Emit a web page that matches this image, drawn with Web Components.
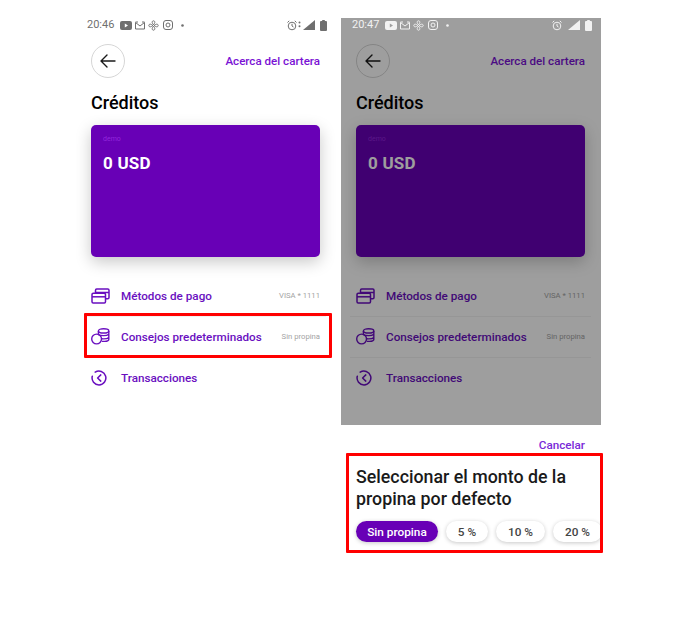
<!DOCTYPE html>
<html lang="es">
<head>
<meta charset="utf-8">
<title>Créditos</title>
<style>
  html, body { margin: 0; background: #fff; }
  body { font-family: Roboto, "Liberation Sans", sans-serif; }
</style>
</head>
<body>
<wallet-page>
  <wallet-phone time="20:46"></wallet-phone>
  <wallet-phone time="20:47" dimmed>
    <tip-sheet slot="sheet"></tip-sheet>
  </wallet-phone>
  <red-box slot="marks" style="left:84px;top:313px;width:248px;height:45px"></red-box>
  <red-box slot="marks" style="left:346px;top:453px;width:257px;height:100px"></red-box>
</wallet-page>

<script>
  // shared purple icons for the rows
  const ICONS = {
    cards: `<svg width="19" height="16" viewBox="0 0 19 16" fill="none" stroke="currentColor" stroke-width="1.5" stroke-linejoin="round">
      <rect x="1" y="5.2" width="13.5" height="9.8" rx="1.2"/><path d="M1 8.8h13.5"/>
      <path d="M4.5 5V2.2q0-1.2 1.2-1.2H16.8q1.2 0 1.2 1.2v7.4q0 1.2-1.2 1.2h-2.2M4.5 4.4H18"/></svg>`,
    coins: `<svg width="19" height="17" viewBox="0 0 19 17" fill="none" stroke="currentColor" stroke-width="1.4">
      <circle cx="5.6" cy="11" r="4.9"/>
      <ellipse cx="12.6" cy="2.9" rx="5.2" ry="2.1"/>
      <path d="M7.4 3v3.6M17.8 3v8.4q0 1.7-4 2h-3M7.4 6.6q1.5 1 5.2 1 3.7 0 5.2-1.4M10.6 10.8q.9.1 2 .1 3.7 0 5.2-1.4"/></svg>`,
    clock: `<svg width="16" height="16" viewBox="0 0 16 16" fill="none" stroke="currentColor" stroke-width="1.5" stroke-linecap="round" stroke-linejoin="round">
      <path d="M4.2 2.2A6.9 6.9 0 1 1 1.3 6.2"/><path d="M9.8 4.9 6.6 8l3.2 3.1"/></svg>`
  };

  class StatusBar extends HTMLElement {
    constructor() {
      super();
      this.attachShadow({ mode: 'open' });
    }
    connectedCallback() {
      const time = this.getAttribute('time') || '';
      const light = this.hasAttribute('light');
      const dots = light ? '' : `<svg style="margin:0 -1px 0 -2px" width="3" height="8" viewBox="0 0 3 8" fill="currentColor"><circle cx="1.500" cy="1.600" r="1"/><circle cx="1.500" cy="5.200" r="1"/></svg>`;
      this.shadowRoot.innerHTML = `
        <style>
          :host {
            display: flex; align-items: center; justify-content: space-between;
            height: 12px; padding: 1px 9px 0 11px;
            color: #6f6f6f; font-size: 11px; line-height: 12px;
          }
          :host([light]) { color: #f2f2f2; }
          .side { display: flex; align-items: center; gap: 3px; }
          .time { margin-right: 3px; }
          svg { display: block; }
        </style>
        <div class="side">
          <span class="time">${time}</span>
          <svg width="12" height="9" viewBox="0 0 12 9"><rect width="12" height="9" rx="2" fill="currentColor"/><path d="M4.800 2.500v4l3.200-2z" fill="var(--hole,#fff)"/></svg>
          <svg width="10" height="9" viewBox="0 0 10 9" fill="none" stroke="currentColor" stroke-width="1"><path d="M.5 8V1.500L5 5l4.500-3.500V8zM.5 1h2.500M7 1h2.500"/></svg>
          <svg width="11" height="11" viewBox="0 0 11 11" fill="none" stroke="currentColor" stroke-width="1"><circle cx="5.500" cy="5.500" r="1"/><path d="M5.500 4.500C3.500 3 4 .8 5.500.8S7.500 3 5.500 4.500zM5.500 6.500C7.500 8 7 10.200 5.500 10.200S3.500 8 5.500 6.500zM4.500 5.500C3 3.500.8 4 .8 5.500S3 7.500 4.500 5.500zM6.500 5.500C8 7.500 10.200 7 10.200 5.500S8 3.500 6.500 5.500z"/></svg>
          <svg style="margin-left:1px" width="10" height="10" viewBox="0 0 10 10" fill="none" stroke="currentColor" stroke-width="1"><rect x=".5" y=".5" width="9" height="9" rx="2.500"/><circle cx="5" cy="5" r="2"/></svg>
          <svg style="margin-left:5px" width="3" height="3" viewBox="0 0 3 3"><circle cx="1.500" cy="1.500" r="1.300" fill="currentColor"/></svg>
        </div>
        <div class="side">
          <svg width="10" height="11" viewBox="0 0 10 11" fill="none" stroke="currentColor" stroke-width="1"><circle cx="5" cy="6" r="3.800"/><path d="M5 3.800V6l1.500 1M.5 2.500 2.200.8M9.500 2.500 7.800.8"/></svg>
          ${dots}
          <svg style="margin-left:${light ? 3 : 0}px" width="12" height="10" viewBox="0 0 12 10"><path d="M12 0v10H0z" fill="currentColor"/></svg>
          <svg style="margin-left:2px" width="7" height="11" viewBox="0 0 7 11"><path d="M2.200 0h2.600v1H6q1 0 1 1v8q0 1-1 1H1q-1 0-1-1V2q0-1 1-1h1.200z" fill="currentColor"/></svg>
        </div>`;
    }
  }
  customElements.define('status-bar', StatusBar);

  class BackButton extends HTMLElement {
    constructor() {
      super();
      this.attachShadow({ mode: 'open' }).innerHTML = `
        <style>
          :host {
            display: flex; align-items: center; justify-content: center;
            width: 32px; height: 32px; border: 1px solid #d6d6d6; border-radius: 50%;
            color: #1a1a1a;
          }
        </style>
        <svg width="16" height="14" viewBox="0 0 16 14" fill="none" stroke="currentColor" stroke-width="1.400" stroke-linecap="round" stroke-linejoin="round">
          <path d="M15 7H1.500M7 1 1 7l6 6"/>
        </svg>`;
    }
  }
  customElements.define('back-button', BackButton);

  class CreditCard extends HTMLElement {
    constructor() {
      super();
      this.attachShadow({ mode: 'open' }).innerHTML = `
        <style>
          :host {
            display: block; box-sizing: border-box; height: 132px; padding: 10px 12px;
            background: #6800b6; border-radius: 5px; color: #fff;
            box-shadow: 0 5px 16px rgba(0,0,0,.22);
          }
          .label { font-size: 7px; line-height: 9px; color: #9227dc; }
          .amount { margin-top: 8px; font-size: 17px; line-height: 22px; font-weight: 700; letter-spacing: .2px; }
        </style>
        <div class="label">demo</div>
        <div class="amount">0 USD</div>`;
    }
  }
  customElements.define('credit-card', CreditCard);

  class MenuRow extends HTMLElement {
    constructor() {
      super();
      this.attachShadow({ mode: 'open' });
    }
    connectedCallback() {
      const icon = ICONS[this.getAttribute('icon')] || '';
      this.shadowRoot.innerHTML = `
        <style>
          :host {
            display: flex; align-items: center; box-sizing: border-box;
            height: 41px; margin: 0 -6px; padding: 0 6px;
            border-bottom: 1px solid rgba(0,0,0,.05);
            color: #6a0fc0;
          }
          :host(:last-child) { border-bottom: 0; }
          .icon { width: 30px; display: flex; align-items: center; }
          .name { flex: 1; font-size: 11.700px; font-weight: 500; }
          .value { font-size: 7.700px; color: #a3a3a3; }
        </style>
        <span class="icon">${icon}</span>
        <span class="name"><slot></slot></span>
        <span class="value">${this.getAttribute('value') || ''}</span>`;
    }
  }
  customElements.define('menu-row', MenuRow);

  class WalletPhone extends HTMLElement {
    constructor() {
      super();
      this.attachShadow({ mode: 'open' });
    }
    connectedCallback() {
      const dimmed = this.hasAttribute('dimmed');
      this.shadowRoot.innerHTML = `
        <style>
          :host { display: block; width: 260px; height: 536px; overflow: hidden; position: relative; }
          .screen { position: relative; box-sizing: border-box; height: 407px; }
          .body { padding: 13px 16px 0 15px; }
          .top { display: flex; align-items: center; justify-content: space-between; }
          .about { font-size: 11.600px; font-weight: 500; color: #7a12d4; }
          h1 { margin: 14px 0 11px; font-size: 18px; line-height: 22px; font-weight: 500; color: #000; }
          .rows { margin-top: 18.500px; }
          .scrim { position: absolute; inset: 0; background: rgba(0,0,0,.38); }
          status-bar { position: relative; z-index: 1; }
        </style>
        <div class="screen">
          <status-bar time="${this.getAttribute('time')}" ${dimmed ? 'light' : ''} style="--hole:${dimmed ? '#9e9e9e' : '#fff'}"></status-bar>
          <div class="body">
            <div class="top">
              <back-button></back-button>
              <span class="about">Acerca del cartera</span>
            </div>
            <h1>Créditos</h1>
            <credit-card></credit-card>
            <div class="rows">
              <menu-row icon="cards" value="VISA * 1111">Métodos de pago</menu-row>
              <menu-row icon="coins" value="Sin propina">Consejos predeterminados</menu-row>
              <menu-row icon="clock">Transacciones</menu-row>
            </div>
          </div>
          ${dimmed ? '<div class="scrim"></div>' : ''}
        </div>
        <slot name="sheet"></slot>`;
    }
  }
  customElements.define('wallet-phone', WalletPhone);

  class TipSheet extends HTMLElement {
    constructor() {
      super();
      this.attachShadow({ mode: 'open' }).innerHTML = `
        <style>
          :host {
            display: block; padding: 14px 16px 0 15px; background: #fff;
            border-radius: 4px 4px 0 0; margin-top: -1px;
          }
          .cancel { text-align: right; font-size: 11.700px; line-height: 14px; font-weight: 500; color: #7a2ad8; }
          h2 { margin: 14px 0 12px; font-size: 17.800px; line-height: 21.500px; font-weight: 500; color: #1a1a1a; }
          .chips { display: flex; gap: 8px; width: 300px; }
        </style>
        <div class="cancel">Cancelar</div>
        <h2>Seleccionar el monto de la<br>propina por defecto</h2>
        <div class="chips">
          <tip-chip selected style="width:82px">Sin propina</tip-chip>
          <tip-chip style="width:42px">5 %</tip-chip>
          <tip-chip style="width:49px">10 %</tip-chip>
          <tip-chip style="width:49px">20 %</tip-chip>
        </div>`;
    }
  }
  customElements.define('tip-sheet', TipSheet);

  class TipChip extends HTMLElement {
    constructor() {
      super();
      this.attachShadow({ mode: 'open' }).innerHTML = `
        <style>
          :host {
            display: flex; align-items: center; justify-content: center; flex: none;
            height: 21px; border-radius: 11px; background: #fff; color: #444;
            font-size: 11.800px; font-weight: 500; box-shadow: 0 1px 4px rgba(0,0,0,.22);
          }
          :host([selected]) { background: #6800b6; color: #fff; }
        </style>
        <slot></slot>`;
    }
  }
  customElements.define('tip-chip', TipChip);

  class RedBox extends HTMLElement {
    constructor() {
      super();
      this.attachShadow({ mode: 'open' }).innerHTML = `
        <style>
          :host { display: block; position: absolute; box-sizing: border-box; border: 3px solid #f00; border-radius: 1px; }
        </style>`;
    }
  }
  customElements.define('red-box', RedBox);

  class WalletPage extends HTMLElement {
    constructor() {
      super();
      this.attachShadow({ mode: 'open' }).innerHTML = `
        <style>
          :host { display: flex; gap: 5px; padding: 18px 0 0 76px; height: 615px; position: relative; overflow: hidden; }
        </style>
        <slot></slot>
        <slot name="marks"></slot>`;
    }
  }
  customElements.define('wallet-page', WalletPage);
</script>
</body>
</html>
